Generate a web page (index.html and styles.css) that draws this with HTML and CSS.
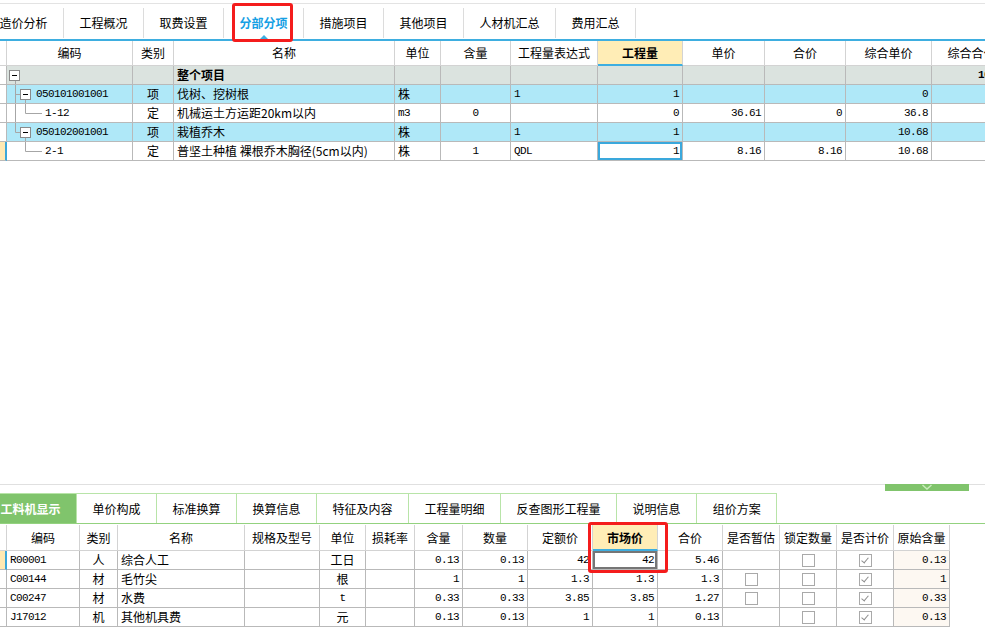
FILE: index.html
```html
<!DOCTYPE html>
<html lang="zh">
<head>
<meta charset="utf-8">
<title>分部分项</title>
<link rel="stylesheet" href="styles.css">
</head>
<body>
<div class="page">
  <div class="upper">
    <div class="tabs">
      <div class="tabs-inner">
        <div class="tab">造价分析</div>
        <div class="tab">工程概况</div>
        <div class="tab">取费设置</div>
        <div class="tab active">分部分项</div>
        <div class="tab">措施项目</div>
        <div class="tab">其他项目</div>
        <div class="tab">人材机汇总</div>
        <div class="tab">费用汇总</div>
      </div>
    </div>

    <div class="grid-wrap">
      <div class="grid top">
        <div class="row head">
          <div class="cell lead"></div>
          <div class="cell">编码</div>
          <div class="cell">类别</div>
          <div class="cell">名称</div>
          <div class="cell">单位</div>
          <div class="cell">含量</div>
          <div class="cell">工程量表达式</div>
          <div class="cell hl">工程量</div>
          <div class="cell">单价</div>
          <div class="cell">合价</div>
          <div class="cell">综合单价</div>
          <div class="cell">综合合价</div>
        </div>

        <div class="row root">
          <div class="cell lead"></div>
          <div class="cell code">
            <svg class="tree" width="29" height="18" viewBox="0 0 29 18"><line x1="8.5" y1="14.5" x2="8.5" y2="18" class="ln"/><rect x="2.5" y="4.5" width="10" height="10" class="bx"/><line x1="5" y1="9.5" x2="10" y2="9.5" class="mn"/></svg>
          </div>
          <div class="cell c"></div>
          <div class="cell b">整个项目</div>
          <div class="cell"></div>
          <div class="cell"></div>
          <div class="cell"></div>
          <div class="cell"></div>
          <div class="cell"></div>
          <div class="cell"></div>
          <div class="cell"></div>
          <div class="cell r n b">10.68</div>
        </div>

        <div class="row blue">
          <div class="cell lead"></div>
          <div class="cell code">
            <svg class="tree" width="29" height="18" viewBox="0 0 29 18"><line x1="8.5" y1="0" x2="8.5" y2="18" class="ln"/><line x1="8.5" y1="9.5" x2="13" y2="9.5" class="ln"/><line x1="18.5" y1="14.5" x2="18.5" y2="18" class="ln"/><rect x="13.5" y="4.5" width="10" height="10" class="bx"/><line x1="16" y1="9.5" x2="21" y2="9.5" class="mn"/></svg>
            <span class="n">050101001001</span>
          </div>
          <div class="cell c">项</div>
          <div class="cell">伐树、挖树根</div>
          <div class="cell">株</div>
          <div class="cell"></div>
          <div class="cell n">1</div>
          <div class="cell r n">1</div>
          <div class="cell"></div>
          <div class="cell"></div>
          <div class="cell r n">0</div>
          <div class="cell"></div>
        </div>

        <div class="row">
          <div class="cell lead"></div>
          <div class="cell code">
            <svg class="tree" width="38" height="18" viewBox="0 0 38 18"><line x1="8.5" y1="0" x2="8.5" y2="18" class="ln"/><line x1="18.5" y1="0" x2="18.5" y2="9.5" class="ln"/><line x1="18.5" y1="9.5" x2="35" y2="9.5" class="ln"/></svg>
            <span class="n">1-12</span>
          </div>
          <div class="cell c">定</div>
          <div class="cell">机械运土方运距20km以内</div>
          <div class="cell n">m3</div>
          <div class="cell c n">0</div>
          <div class="cell"></div>
          <div class="cell r n">0</div>
          <div class="cell r n">36.61</div>
          <div class="cell r n">0</div>
          <div class="cell r n">36.8</div>
          <div class="cell"></div>
        </div>

        <div class="row blue">
          <div class="cell lead"></div>
          <div class="cell code">
            <svg class="tree" width="29" height="18" viewBox="0 0 29 18"><line x1="8.5" y1="0" x2="8.5" y2="9.5" class="ln"/><line x1="8.5" y1="9.5" x2="13" y2="9.5" class="ln"/><line x1="18.5" y1="14.5" x2="18.5" y2="18" class="ln"/><rect x="13.5" y="4.5" width="10" height="10" class="bx"/><line x1="16" y1="9.5" x2="21" y2="9.5" class="mn"/></svg>
            <span class="n">050102001001</span>
          </div>
          <div class="cell c">项</div>
          <div class="cell">栽植乔木</div>
          <div class="cell">株</div>
          <div class="cell"></div>
          <div class="cell n">1</div>
          <div class="cell r n">1</div>
          <div class="cell"></div>
          <div class="cell"></div>
          <div class="cell r n">10.68</div>
          <div class="cell"></div>
        </div>

        <div class="row">
          <div class="cell lead sel"></div>
          <div class="cell code">
            <svg class="tree" width="38" height="18" viewBox="0 0 38 18"><line x1="18.5" y1="0" x2="18.5" y2="9.5" class="ln"/><line x1="18.5" y1="9.5" x2="35" y2="9.5" class="ln"/></svg>
            <span class="n">2-1</span>
          </div>
          <div class="cell c">定</div>
          <div class="cell">普坚土种植 裸根乔木胸径(5cm以内)</div>
          <div class="cell">株</div>
          <div class="cell c n">1</div>
          <div class="cell n">QDL</div>
          <div class="cell r n focus-blue">1</div>
          <div class="cell r n">8.16</div>
          <div class="cell r n">8.16</div>
          <div class="cell r n">10.68</div>
          <div class="cell"></div>
        </div>
      </div>
    </div>
  </div>

  <div class="lower">
    <div class="handle">
      <svg width="12" height="6" viewBox="0 0 12 6"><polyline points="1.5,1 6,5 10.5,1" class="chev"/></svg>
    </div>
    <div class="btabs">
      <div class="btabs-inner">
        <div class="btab active">工料机显示</div>
        <div class="btab">单价构成</div>
        <div class="btab">标准换算</div>
        <div class="btab">换算信息</div>
        <div class="btab">特征及内容</div>
        <div class="btab">工程量明细</div>
        <div class="btab">反查图形工程量</div>
        <div class="btab">说明信息</div>
        <div class="btab">组价方案</div>
      </div>
    </div>

    <div class="grid bottom">
      <div class="row head">
        <div class="cell lead"></div>
        <div class="cell">编码</div>
        <div class="cell">类别</div>
        <div class="cell">名称</div>
        <div class="cell">规格及型号</div>
        <div class="cell">单位</div>
        <div class="cell">损耗率</div>
        <div class="cell">含量</div>
        <div class="cell">数量</div>
        <div class="cell">定额价</div>
        <div class="cell hl">市场价</div>
        <div class="cell">合价</div>
        <div class="cell">是否暂估</div>
        <div class="cell">锁定数量</div>
        <div class="cell">是否计价</div>
        <div class="cell">原始含量</div>
      </div>

      <div class="row">
        <div class="cell lead sel"></div>
        <div class="cell n">R00001</div>
        <div class="cell c">人</div>
        <div class="cell">综合人工</div>
        <div class="cell"></div>
        <div class="cell c">工日</div>
        <div class="cell"></div>
        <div class="cell r n">0.13</div>
        <div class="cell r n">0.13</div>
        <div class="cell r n">42</div>
        <div class="cell r n focus-grey">42</div>
        <div class="cell r n">5.46</div>
        <div class="cell c"></div>
        <div class="cell c"><span class="cb"></span></div>
        <div class="cell c"><span class="cb on"></span></div>
        <div class="cell r n orig">0.13</div>
      </div>

      <div class="row">
        <div class="cell lead"></div>
        <div class="cell n">C00144</div>
        <div class="cell c">材</div>
        <div class="cell">毛竹尖</div>
        <div class="cell"></div>
        <div class="cell c">根</div>
        <div class="cell"></div>
        <div class="cell r n">1</div>
        <div class="cell r n">1</div>
        <div class="cell r n">1.3</div>
        <div class="cell r n">1.3</div>
        <div class="cell r n">1.3</div>
        <div class="cell c"><span class="cb"></span></div>
        <div class="cell c"><span class="cb"></span></div>
        <div class="cell c"><span class="cb on"></span></div>
        <div class="cell r n orig">1</div>
      </div>

      <div class="row">
        <div class="cell lead"></div>
        <div class="cell n">C00247</div>
        <div class="cell c">材</div>
        <div class="cell">水费</div>
        <div class="cell"></div>
        <div class="cell c n">t</div>
        <div class="cell"></div>
        <div class="cell r n">0.33</div>
        <div class="cell r n">0.33</div>
        <div class="cell r n">3.85</div>
        <div class="cell r n">3.85</div>
        <div class="cell r n">1.27</div>
        <div class="cell c"><span class="cb"></span></div>
        <div class="cell c"><span class="cb"></span></div>
        <div class="cell c"><span class="cb on"></span></div>
        <div class="cell r n orig">0.33</div>
      </div>

      <div class="row">
        <div class="cell lead"></div>
        <div class="cell n">J17012</div>
        <div class="cell c">机</div>
        <div class="cell">其他机具费</div>
        <div class="cell"></div>
        <div class="cell c">元</div>
        <div class="cell"></div>
        <div class="cell r n">0.13</div>
        <div class="cell r n">0.13</div>
        <div class="cell r n">1</div>
        <div class="cell r n">1</div>
        <div class="cell r n">0.13</div>
        <div class="cell c"></div>
        <div class="cell c"><span class="cb"></span></div>
        <div class="cell c"><span class="cb on"></span></div>
        <div class="cell r n orig">0.13</div>
      </div>
    </div>
  </div>

  <div class="mark mark-top"></div>
  <div class="mark mark-bottom"></div>
</div>
</body>
</html>
```

FILE: styles.css
```css
* { box-sizing: border-box; }

html, body {
  margin: 0;
  padding: 0;
  background: #ffffff;
}

body {
  width: 985px;
  height: 632px;
  overflow: hidden;
  font-family: "Noto Sans CJK SC", "Liberation Sans", sans-serif;
  font-size: 12px;
  color: #000;
}

.page {
  position: relative;
  display: flex;
  flex-direction: column;
  width: 985px;
  height: 632px;
  overflow: hidden;
}

.upper { flex: 1; }

/* ---------- top tabs ---------- */
.tabs {
  margin-top: 3px;
  height: 38px;
  padding-top: 4px;
  border-top: 1px solid #e3e3e3;
  border-bottom: 2px solid #3eaee0;
  overflow: hidden;
}

.tabs-inner {
  display: flex;
  height: 30px;
  margin-left: -16px;
}

.tab {
  position: relative;
  padding: 0 15.5px;
  line-height: 30px;
  white-space: nowrap;
  border-right: 1px solid #dcdcdc;
}

.tab.active {
  color: #16a0e4;
  font-weight: bold;
}

.tab.active::after {
  content: "";
  position: absolute;
  left: 50%;
  bottom: -1px;
  margin-left: -4px;
  border-left: 4px solid transparent;
  border-right: 4px solid transparent;
  border-bottom: 4px solid #3eaee0;
}

/* ---------- grids ---------- */
.grid-wrap {
  width: 985px;
  overflow: hidden;
}

.grid.top { width: 1012px; }
.grid.bottom { width: 950px; margin-top: 1px; }

.row { display: grid; }

.top .row {
  grid-template-columns: 7px 126px 41px 221px 46px 70px 87px 85px 82px 81px 86px 80px;
}

.bottom .row {
  grid-template-columns: 7px 73px 38px 127px 75px 46px 49px 48px 65px 65px 65px 65px 57px 57px 57px 56px;
}

.cell {
  height: 19px;
  line-height: 18px;
  padding: 0 3px;
  white-space: nowrap;
  overflow: hidden;
  border-right: 1px solid #b9b9b9;
  border-bottom: 1px solid #b9b9b9;
}

.head .cell {
  height: 25px;
  line-height: 24px;
  text-align: center;
  border-right-color: #d3d3d3;
  border-bottom-color: #d3d3d3;
  background: #fff;
}

.bottom .head .cell { height: 26px; line-height: 25px; }

.head .cell.hl {
  background: #ffedb6;
  font-weight: bold;
  border-bottom: 2px solid #3eaee0;
}

.c { text-align: center; }
.r { text-align: right; }
.b { font-weight: bold; }

.n {
  font-family: "Liberation Mono", "DejaVu Sans Mono", monospace;
  font-size: 11px;
  letter-spacing: -0.6px;
}

.cell.lead { padding: 0; background: #fff; }
.cell.lead.sel {
  background: #ffe9b2;
  border-right: 2px solid #3ba7d9;
}

.root .cell:not(.lead) { background: #dbe3df; }
.blue .cell:not(.lead) { background: #afe8f8; }

.cell.code {
  display: flex;
  align-items: flex-start;
  padding: 0;
}

.tree { flex: none; display: block; }
.tree .ln { stroke: #a6a6a6; stroke-width: 1; }
.tree .bx { fill: #fff; stroke: #8a8a8a; stroke-width: 1; }
.tree .mn { stroke: #000; stroke-width: 1; }

.focus-blue { box-shadow: inset 0 0 0 2px #3aa8dc; background: #fff; }
.focus-grey { box-shadow: inset 0 0 0 2px #767676; }

.orig { background: #fdf8f2; }

.cb {
  display: inline-block;
  width: 13px;
  height: 13px;
  margin-top: 3px;
  vertical-align: top;
  border: 1px solid #a9a9a9;
  background: #fff;
  position: relative;
}

.cb.on::after {
  content: "";
  position: absolute;
  left: 3px;
  top: 1px;
  width: 3px;
  height: 6px;
  border-right: 1.5px solid #8d8d8d;
  border-bottom: 1.5px solid #8d8d8d;
  transform: rotate(40deg);
}

/* ---------- lower panel ---------- */
.lower {
  position: relative;
  height: 148px;
  border-top: 1px solid #e0e0e0;
}

.handle {
  position: absolute;
  left: 885px;
  top: -1px;
  width: 84px;
  height: 7px;
  background: #80c46c;
  display: flex;
  justify-content: center;
}

.chev { fill: none; stroke: #c9ecbc; stroke-width: 1.5; }

.btabs {
  margin-top: 8px;
  height: 31px;
  border-bottom: 1px solid #93d27f;
  overflow: hidden;
}

.btabs-inner {
  display: flex;
  height: 30px;
  margin-left: -15px;
  border-top: 1px solid #b8e4a8;
  width: max-content;
}

.btab {
  padding: 0 15.5px;
  line-height: 29px;
  white-space: nowrap;
  border-right: 1px solid #b8e4a8;
}

.btab.active {
  background: #80c46c;
  color: #fff;
  font-weight: bold;
}

/* ---------- annotations ---------- */
.mark {
  position: absolute;
  border: 3px solid #f41c1c;
  border-radius: 3px;
}

.mark-top { left: 232px; top: 3px; width: 61px; height: 39px; }
.mark-bottom { left: 588px; top: 522px; width: 80px; height: 51px; }
```
